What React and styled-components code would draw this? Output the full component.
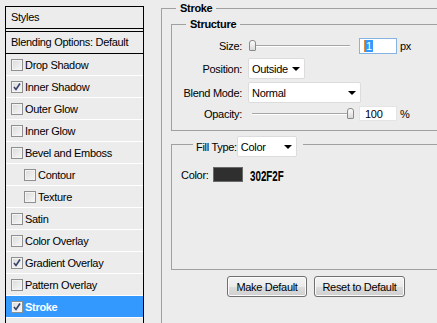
import React from "react";
import styled, { createGlobalStyle } from "styled-components";

const GlobalStyle = createGlobalStyle`
  html, body {
    margin: 0;
    padding: 0;
    background: #ececec;
  }
  body {
    font-family: "Liberation Sans", Arial, sans-serif;
    font-size: 11px;
    letter-spacing: -0.3px;
    color: #000;
  }
`;

const effects = [
  { name: "Drop Shadow" },
  { name: "Inner Shadow", checked: true },
  { name: "Outer Glow" },
  { name: "Inner Glow" },
  { name: "Bevel and Emboss" },
  { name: "Contour", indent: true },
  { name: "Texture", indent: true },
  { name: "Satin" },
  { name: "Color Overlay" },
  { name: "Gradient Overlay", checked: true },
  { name: "Pattern Overlay" },
  { name: "Stroke", checked: true, selected: true },
];

export default function App() {
  return (
    <Window>
      <GlobalStyle />
      <StylesPanel>
        <PanelHeader>Styles</PanelHeader>
        <BlendRow>Blending Options: Default</BlendRow>
        {effects.map((fx) => (
          <EffectRow key={fx.name} $indent={fx.indent} $selected={fx.selected}>
            <Checkbox checked={fx.checked} />
            <span>{fx.name}</span>
          </EffectRow>
        ))}
      </StylesPanel>

      <RightPane>
        <OuterFrame>
          <FrameLegend $offset={5}>Stroke</FrameLegend>

          <StructureFrame>
            <FrameLegend $offset={14}>Structure</FrameLegend>

            <FormRow $height={16}>
              <Label>Size:</Label>
              <Slider value={0} />
              <TextBox $focused>
                <Selected>1</Selected>
              </TextBox>
              <Unit>px</Unit>
            </FormRow>

            <FormRow $height={21} $gap={4}>
              <Label>Position:</Label>
              <Select width={57} value="Outside" />
            </FormRow>

            <FormRow $height={21} $gap={3}>
              <Label>Blend Mode:</Label>
              <Select width={113} value="Normal" />
            </FormRow>

            <FormRow $height={15} $gap={3}>
              <Label>Opacity:</Label>
              <Slider value={1} />
              <TextBox>100</TextBox>
              <Unit>%</Unit>
            </FormRow>
          </StructureFrame>

          <FillFrame>
            <FillLegend>
              <LegendRow>
                <span>Fill Type:</span>
                <Select width={60} value="Color" />
              </LegendRow>
            </FillLegend>
            <ColorRow>
              <ColorLabel>Color:</ColorLabel>
              <Swatch $color="#302f2f" />
              <HexValue>302F2F</HexValue>
            </ColorRow>
          </FillFrame>

          <ButtonRow>
            <Button $width={80}>Make Default</Button>
            <Button $width={91}>Reset to Default</Button>
          </ButtonRow>
        </OuterFrame>
      </RightPane>
    </Window>
  );
}

function Checkbox({ checked }) {
  return (
    <Box>
      {checked && (
        <svg width="10" height="10" viewBox="0 0 10 10">
          <path
            d="M2 5 L4 7.5 L8 1.5"
            fill="none"
            stroke="#34406a"
            strokeWidth="1.6"
          />
        </svg>
      )}
    </Box>
  );
}

function Slider({ value }) {
  return (
    <Track>
      <Thumb style={{ left: `${value * 100}%` }} />
    </Track>
  );
}

function Select({ width, value }) {
  return (
    <SelectBox $width={width}>
      <span>{value}</span>
      <Arrow />
    </SelectBox>
  );
}

const Window = styled.div`
  display: flex;
  width: 437px;
  height: 323px;
  overflow: hidden;
`;

const StylesPanel = styled.div`
  flex-shrink: 0;
  box-sizing: border-box;
  width: 139px;
  height: 340px;
  margin: 6px 0 0 5px;
  border: 1px solid #000;
  border-bottom: none;
`;

const PanelHeader = styled.div`
  height: 21px;
  line-height: 21px;
  padding-left: 5px;
  border-bottom: 1px solid #000;
  margin-bottom: 2px;
`;

const BlendRow = styled.div`
  height: 21px;
  line-height: 21px;
  padding-left: 5px;
  border-top: 1px solid #000;
  border-bottom: 1px solid #000;
`;

const EffectRow = styled.div`
  display: flex;
  align-items: center;
  gap: 2px;
  height: 21px;
  padding-left: ${(p) => (p.$indent ? 18 : 5)}px;
  border-bottom: 1px solid #fff;
  background: ${(p) => (p.$selected ? "#3399ff" : "transparent")};
  color: ${(p) => (p.$selected ? "#fff" : "#000")};
  font-weight: ${(p) => (p.$selected ? "bold" : "normal")};
`;

const Box = styled.div`
  box-sizing: border-box;
  width: 12px;
  height: 12px;
  border: 1px solid #8e8f8f;
  background: linear-gradient(135deg, #dadada, #f8f8f8);
  box-shadow: inset 0 0 0 1px #f4f4f4;
  display: flex;
  align-items: center;
  justify-content: center;
`;

const RightPane = styled.div`
  margin: 2px 0 0 17px;
`;

const OuterFrame = styled.fieldset`
  box-sizing: border-box;
  width: 320px;
  height: 360px;
  min-width: 0;
  margin: 0;
  padding: 3px 0 0 9px;
  border: 1px solid #a0a0a0;
`;

const FrameLegend = styled.legend`
  margin-left: ${(p) => p.$offset}px;
  padding: 0 4px;
  font-weight: bold;
  line-height: 13px;
`;

const StructureFrame = styled.fieldset`
  box-sizing: border-box;
  width: 300px;
  min-width: 0;
  margin: 0;
  padding: 7px 0 9px 0;
  border: 1px solid #a0a0a0;
`;

const FormRow = styled.div`
  display: flex;
  align-items: center;
  height: ${(p) => p.$height}px;
  margin-top: ${(p) => p.$gap || 0}px;
`;

const Label = styled.div`
  width: 70px;
  margin-right: 6px;
  text-align: right;
`;

const Track = styled.div`
  position: relative;
  width: 98px;
  height: 1px;
  margin-left: 4px;
  background: #a6a6a6;
  border-bottom: 1px solid #fff;
`;

const Thumb = styled.div`
  position: absolute;
  top: -5px;
  box-sizing: border-box;
  width: 7px;
  height: 11px;
  margin-left: -3px;
  border: 1px solid #8a8a8a;
  border-radius: 3px 3px 1px 1px;
  background: linear-gradient(#fdfdfd, #d9d9d9);
`;

const TextBox = styled.div`
  box-sizing: border-box;
  width: 38px;
  height: 100%;
  margin-left: 9px;
  padding-left: 5px;
  display: flex;
  align-items: center;
  background: #fff;
  border: 1px solid ${(p) => (p.$focused ? "#85b4e4" : "#e4e4e4")};
`;

const Selected = styled.span`
  background: #3399ff;
  color: #fff;
  line-height: 12px;
  padding: 0 1px;
  box-shadow: -1px 0 0 #e08a3a;
`;

const Unit = styled.span`
  margin-left: 3px;
`;

const SelectBox = styled.div`
  box-sizing: border-box;
  width: ${(p) => p.$width}px;
  height: 21px;
  padding: 0 4px 0 3px;
  display: flex;
  align-items: center;
  justify-content: space-between;
  background: #fff;
  border: 1px solid #dcdcdc;
  border-radius: 2px;
`;

const Arrow = styled.span`
  width: 0;
  height: 0;
  border-left: 4px solid transparent;
  border-right: 4px solid transparent;
  border-top: 4px solid #000;
  margin-top: 1px;
`;

const FillFrame = styled.fieldset`
  box-sizing: border-box;
  width: 300px;
  min-width: 0;
  margin: 1px 0 0 0;
  padding: 10px 0 87px 9px;
  border: 1px solid #a0a0a0;
`;

const FillLegend = styled.legend`
  margin-left: 12px;
  padding: 4px 6px 0 3px;
`;

const LegendRow = styled.div`
  display: flex;
  align-items: center;
  gap: 0;
`;

const ColorRow = styled.div`
  display: flex;
  align-items: center;
  height: 15px;
`;

const ColorLabel = styled.span`
  width: 32px;
`;

const Swatch = styled.div`
  box-sizing: border-box;
  width: 30px;
  height: 15px;
  background: ${(p) => p.$color};
  border: 1px solid #6a6a6a;
`;

const HexValue = styled.span`
  display: inline-block;
  margin-left: 7px;
  margin-top: 3px;
  font-weight: bold;
  font-size: 14px;
  letter-spacing: 0;
  transform: scaleX(0.7);
  transform-origin: left center;
`;

const ButtonRow = styled.div`
  display: flex;
  gap: 7px;
  margin: 6px 0 0 56px;
`;

const Button = styled.button`
  box-sizing: border-box;
  width: ${(p) => p.$width}px;
  height: 21px;
  padding: 0;
  font-family: "Liberation Sans", Arial, sans-serif;
  font-size: 11px;
  letter-spacing: -0.3px;
  color: #000;
  border: 1px solid #707070;
  border-radius: 3px;
  background: linear-gradient(#f4f4f4 0%, #ebebeb 50%, #dddddd 51%, #cfcfcf 100%);
  box-shadow: inset 0 0 0 1px #fbfbfb;
`;
